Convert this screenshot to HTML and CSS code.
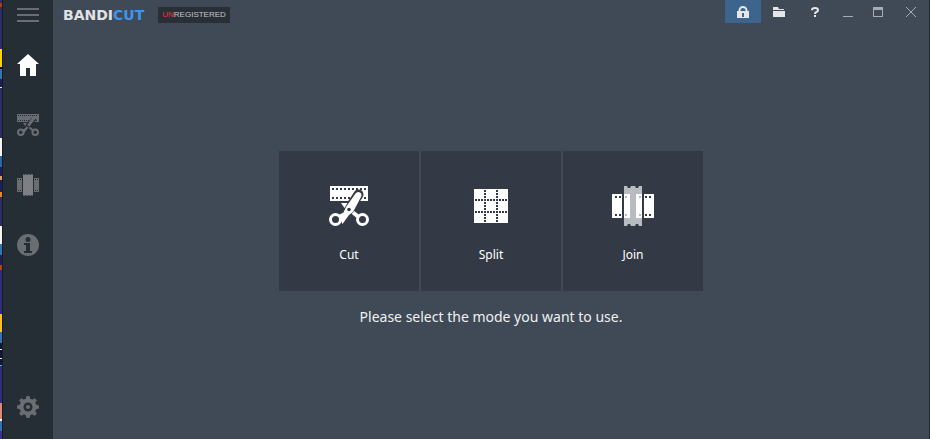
FILE: index.html
```html
<!DOCTYPE html>
<html lang="en">
<head>
  <meta charset="UTF-8">
  <meta name="viewport" content="width=device-width, initial-scale=1.0">
  <title>Bandicut</title>
  <link rel="stylesheet" href="styles.css">
</head>
<body>
  <div class="desktop-edge"></div>

  <nav class="sidebar">
    <button class="side-btn menu" aria-label="Menu">
      <svg width="22" height="14" viewBox="0 0 22 14"><path d="M0 0h22v2H0zM0 6h22v2H0zM0 12h22v2H0z"/></svg>
    </button>
    <button class="side-btn active" aria-label="Home">
      <svg width="22" height="22" viewBox="0 0 22 22"><path d="M11 0L22 10H19V22H13V14H9V22H3V10H0z"/></svg>
    </button>
    <button class="side-btn" aria-label="Cut">
      <svg width="22" height="22" viewBox="0 0 22 22">
        <path d="M0 0h22v8H0z"/>
        <path class="hole" d="M1 1.500h20M1 6.500h20" stroke-dasharray="1 1"/>
        <path class="gap" d="M17.500 4L11 12"/>
        <path d="M15.500 2.500q3-1.500 3.500 1.500l-7 9-5 6-2.500-3 4-2 2-3zM6 9h4l-2 3z"/>
        <path class="line" d="M12.500 13.500L16 16.500"/>
        <circle class="line" cx="3.800" cy="18.200" r="2.800"/>
        <circle class="line" cx="18.200" cy="18.200" r="2.800"/>
        <circle class="dark" cx="11" cy="12.500" r="1"/>
      </svg>
    </button>
    <button class="side-btn" aria-label="Join">
      <svg width="22" height="22" viewBox="0 0 22 22">
        <path d="M0 4h5v14H0zM17 4h5v14h-5z"/>
        <path class="hole" d="M1 5.500h4M1 16.500h4M18 5.500h4M18 16.500h4" stroke-dasharray="1 1"/>
        <path class="tape" d="M6 0l1 1 2-1 1 1 2-1 1 1 2-1 1 1v21l-1-1-2 1-1-1-2 1-1-1-2 1-1-1z"/>
      </svg>
    </button>
    <button class="side-btn" aria-label="About">
      <svg width="22" height="22" viewBox="0 0 22 22">
        <circle cx="11" cy="11" r="11"/>
        <circle class="dark" cx="11" cy="5.500" r="2.500"/>
        <path class="dark" d="M7 9h6v8h2v2H7v-2h2v-6H7z"/>
      </svg>
    </button>
    <button class="side-btn settings" aria-label="Settings">
      <svg width="22" height="22" viewBox="0 0 22 22">
        <circle cx="11" cy="11" r="8.500"/>
        <path d="M9.500 0h3l1 4h-5zM9.500 22h3l1-4h-5zM0 9.500v3l4 1v-5zM22 9.500v3l-4 1v-5z"/>
        <path d="M9.500 0h3l1 4h-5zM9.500 22h3l1-4h-5zM0 9.500v3l4 1v-5zM22 9.500v3l-4 1v-5z" transform="rotate(45 11 11)"/>
        <circle class="dark" cx="11" cy="11" r="4.500"/>
        <circle cx="11" cy="11" r="2"/>
      </svg>
    </button>
  </nav>

  <div class="window">
    <header class="titlebar">
      <div class="logo">BANDI<span>CUT</span></div>
      <div class="badge"><span>UN</span>REGISTERED</div>
      <div class="controls">
        <button class="tool lock" aria-label="Register">
          <svg width="12" height="12" viewBox="0 0 12 12">
            <path d="M2.500 6V4.500a3.500 3.500 0 0 1 7 0V6" fill="none" stroke="currentColor" stroke-width="2"/>
            <path d="M0 5h12v7H0z"/>
            <path class="lock-hole" d="M5 7h2v4H5z"/>
          </svg>
        </button>
        <button class="tool" aria-label="Open folder">
          <svg width="12" height="10" viewBox="0 0 12 10"><path d="M0 0h5l1 2h5v1H0zM0 4h12v6H0z"/></svg>
        </button>
        <button class="tool" aria-label="Help">
          <svg width="8" height="10" viewBox="0 0 8 10">
            <path d="M1 3.200Q1 1 4 1t3 2.200Q7 4.500 5 5.200 4 5.600 4 7" fill="none" stroke="currentColor" stroke-width="2"/>
            <path d="M3 8h2v2H3z"/>
          </svg>
        </button>
        <button class="win" aria-label="Minimize">
          <svg width="10" height="10" viewBox="0 0 10 10"><path d="M0 9h10v1H0z"/></svg>
        </button>
        <button class="win" aria-label="Maximize">
          <svg width="10" height="10" viewBox="0 0 10 10"><path d="M0 0h10v10H0zM1 3v6h8V3z" fill-rule="evenodd"/></svg>
        </button>
        <button class="win close" aria-label="Close">
          <svg width="10" height="10" viewBox="0 0 10 10"><path d="M0 0l10 10M10 0L0 10" fill="none" stroke="currentColor"/></svg>
        </button>
      </div>
    </header>

    <main class="content">
      <div class="modes">
        <button class="mode">
          <span class="icon">
            <svg width="40" height="40" viewBox="0 0 40 40">
              <path d="M1 0h38v15H1z"/>
              <path class="hole" d="M3 3h34M3 12h34" stroke-dasharray="2 2"/>
              <path class="gap" d="M29.500 8.500L20 23"/>
              <path d="M26.500 7.500q2-2.500 4.500-1 2.500 2 1 4.500L24 26l-4 3-6.500 9-4-9 5-2.500 2.500-5.500z"/>
              <path d="M12 17h6.500l-3 5z"/>
              <path class="line" d="M24 26.500l5 4"/>
              <circle class="dark" cx="6.500" cy="33.500" r="4"/>
              <circle class="ring" cx="6.500" cy="33.500" r="5"/>
              <circle class="ring" cx="33.500" cy="33.500" r="5"/>
              <circle class="dark" cx="20" cy="23.500" r="1.800"/>
            </svg>
          </span>
          <span class="label">Cut</span>
        </button>
        <button class="mode">
          <span class="icon">
            <svg width="34" height="34" viewBox="0 0 34 34">
              <path d="M0 0h34v34H0z"/>
              <path class="hole" d="M1 11h33M1 23h33M11 1v33M23 1v33" stroke-dasharray="2 1"/>
            </svg>
          </span>
          <span class="label">Split</span>
        </button>
        <button class="mode">
          <span class="icon">
            <svg width="42" height="40" viewBox="0 0 42 40">
              <path class="tape" d="M12 0h3l1 2h2l1-2h4l1 2h2l1-2h3v40h-3l-1-2h-2l-1 2h-4l-1-2h-2l-1 2h-3z"/>
              <path d="M0 8h10v24H0zM12 8h6v24h-6zM24 8h6v24h-6zM32 8h10v24H32z"/>
              <path class="hole" d="M3 11h2M7 11h2M3 29h2M7 29h2M33 11h2M37 11h2M33 29h2M37 29h2"/>
              <path class="tape" d="M13 10h2v2h-2zM27 10h2v2h-2zM13 28h2v2h-2zM27 28h2v2h-2z"/>
            </svg>
          </span>
          <span class="label">Join</span>
        </button>
      </div>
      <p class="message">Please select the mode you want to use.</p>
    </main>
  </div>
</body>
</html>
```
FILE: styles.css
```css
* { box-sizing: border-box; }
body {
  margin: 0;
  min-height: 100vh;
  display: flex;
  background: #404a56;
  font-family: "Noto Sans", "Open Sans", sans-serif;
  color: #fff;
}
button {
  border: 0;
  padding: 0;
  background: none;
  color: inherit;
  font: inherit;
  cursor: pointer;
}
svg { display: block; fill: currentColor; }

/* strip of the desktop behind the window */
.desktop-edge {
  width: 2px;
  background: linear-gradient(
    #2e2e68 3px, #b43c08 3px 7px, #2c2e66 7px 49px,
    #ffd200 49px 67px, #101830 67px 69px, #3474b4 69px 79px, #1c2058 79px 87px,
    #e8e8f0 87px 88px, #2c2e66 88px 138px,
    #f4f4f4 138px 156px, #2868a8 156px 167px, #1c2058 167px 176px,
    #d8a060 176px 180px, #1c2058 180px 192px, #f08820 192px 197px, #2c2e66 197px 226px,
    #f4f4f4 226px 244px, #3474b4 244px 255px, #1c2058 255px 265px,
    #b44410 265px 270px, #2c2e80 270px 314px,
    #ffc020 314px 332px, #3474b4 332px 343px, #101838 343px 349px,
    #e8e8f0 349px 350px, #101838 350px 358px, #e8e8f0 358px 359px, #101838 359px 365px,
    #50b0e8 365px 366px, #2c2e80 366px 403px,
    #e08878 403px 419px, #f4f4f4 419px 421px, #3474b4 421px 431px, #3c3090 431px);
}

.sidebar {
  width: 51px;
  display: flex;
  flex-direction: column;
  background: #252d35;
  border-left: 1px solid #161c22;
  color: #6a6e73;
}
.side-btn {
  height: 60px;
  display: flex;
  align-items: center;
  justify-content: center;
}
.side-btn.menu { height: 30px; margin-bottom: 5px; }
.side-btn.active { color: #fff; }
.side-btn.settings { margin-top: auto; margin-bottom: 2px; }
.sidebar .dark { fill: #252d35; }
.sidebar .hole { stroke: #252d35; stroke-width: 1; }
.sidebar .gap { stroke: #252d35; stroke-width: 5; }
.sidebar .line { fill: none; stroke: currentColor; stroke-width: 2; }
.sidebar .tape { fill: #7c8085; }

.window {
  flex: 1;
  display: flex;
  flex-direction: column;
  border-right: 1px solid #202832;
}
.titlebar {
  height: 30px;
  display: flex;
  align-items: center;
  padding-left: 10px;
}
.logo {
  font: bold 14px "DejaVu Sans", sans-serif;
  color: #e0e2e4;
}
.logo span { color: #3c96f0; }
.badge {
  margin-left: 14px;
  padding: 0 4px;
  background: #292f37;
  color: #c4c6c8;
  font: 8px/16px "Liberation Sans", Arial, sans-serif;
}
.badge span { color: #f03434; }
.controls {
  display: flex;
  align-self: flex-start;
  margin-left: auto;
}
.tool, .win {
  width: 36px;
  height: 23px;
  display: flex;
  align-items: center;
  justify-content: center;
  color: #e4e6e8;
}
.win { width: 30px; color: #a8acb2; }
.win.close { width: 36px; }
.lock { background: #3c648c; }
.lock-hole { fill: #3c648c; }

.content {
  flex: 1;
  display: flex;
  flex-direction: column;
  align-items: center;
  justify-content: center;
  padding-top: 11px;
}
.modes { display: flex; gap: 2px; }
.mode {
  width: 140px;
  height: 140px;
  display: flex;
  flex-direction: column;
  align-items: center;
  padding-top: 30px;
  background: #333a46;
}
.mode .icon {
  height: 50px;
  display: flex;
  align-items: center;
}
.mode .label {
  margin-top: 14px;
  font-size: 12px;
  line-height: 20px;
}
.mode .dark { fill: #333a46; }
.mode .hole { stroke: #333a46; stroke-width: 2; }
.mode .gap { stroke: #333a46; stroke-width: 10; stroke-linecap: round; }
.mode .line { stroke: #fff; stroke-width: 4; }
.mode .ring { fill: none; stroke: #fff; stroke-width: 3; }
.mode .tape { fill: #b8bbbf; }
.message {
  margin: 14px 0 0;
  font-size: 14px;
  line-height: 24px;
  color: #eef0f2;
}
```
